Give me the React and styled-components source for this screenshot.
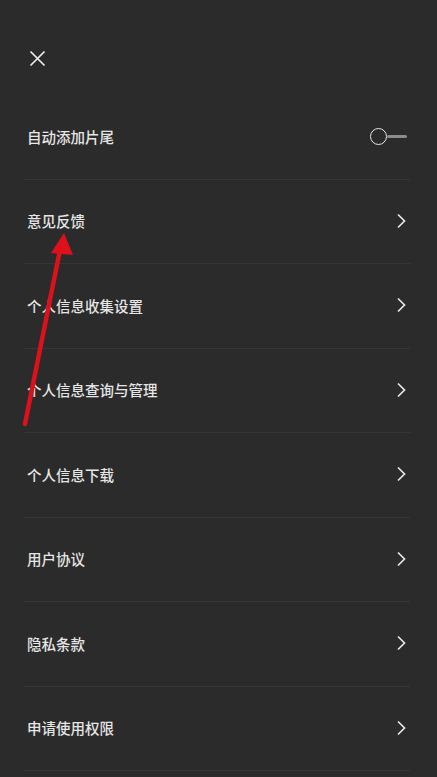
import React from "react";
import styled, { createGlobalStyle } from "styled-components";

const GlobalStyle = createGlobalStyle`
  html, body {
    margin: 0;
    padding: 0;
    background: #2b2b2b;
  }
  body {
    font-family: "Noto Sans CJK SC", "Noto Sans", sans-serif;
  }
`;

const Page = styled.div`
  position: relative;
  width: 437px;
  height: 777px;
  background: #2b2b2b;
  overflow: hidden;
`;

const Header = styled.div`
  height: 95px;
  display: flex;
  align-items: flex-start;
  padding: 50px 0 0 29px;
  box-sizing: border-box;
`;

const CloseButton = styled.button`
  width: 17px;
  height: 17px;
  padding: 0;
  border: none;
  background: transparent;
  display: flex;
  align-items: center;
  justify-content: center;
  cursor: pointer;
`;

const List = styled.div`
  display: flex;
  flex-direction: column;
  margin: 0 27px 0 24px;
`;

const Row = styled.div`
  height: 84.5px;
  box-sizing: border-box;
  display: flex;
  align-items: center;
  justify-content: space-between;
  padding: 0 4px 1px 3px;
  border-bottom: 1px solid #363636;
`;

const Label = styled.span`
  color: #e6e6e6;
  font-size: 14.5px;
  font-weight: 500;
`;

const Toggle = styled.div`
  width: 37px;
  height: 20px;
  display: flex;
  align-items: center;
  margin-right: -1px;
`;

const Knob = styled.div`
  width: 15px;
  height: 15px;
  border: 1.5px solid #e8e8e8;
  border-radius: 50%;
  background: #2b2b2b;
  z-index: 1;
`;

const Track = styled.div`
  flex: 1;
  height: 3px;
  background: #8c8c8c;
  border-radius: 2px;
`;

const Annotation = styled.svg`
  position: absolute;
  left: 0;
  top: 0;
  pointer-events: none;
`;

const items = [
  "意见反馈",
  "个人信息收集设置",
  "个人信息查询与管理",
  "个人信息下载",
  "用户协议",
  "隐私条款",
  "申请使用权限",
];

function Chevron() {
  return (
    <svg width="10" height="16" viewBox="0 0 10 16">
      <path d="M2 1.5 L8.5 8 L2 14.5" fill="none" stroke="#e6e6e6" strokeWidth="1.7" />
    </svg>
  );
}

export default function App() {
  return (
    <>
      <GlobalStyle />
      <Page>
        <Header>
          <CloseButton aria-label="关闭">
            <svg width="17" height="17" viewBox="0 0 17 17">
              <path d="M1.5 1.5 L15.5 15.5 M15.5 1.5 L1.5 15.5" stroke="#ededed" strokeWidth="1.7" />
            </svg>
          </CloseButton>
        </Header>
        <List>
          <Row>
            <Label>自动添加片尾</Label>
            <Toggle>
              <Knob />
              <Track />
            </Toggle>
          </Row>
          {items.map((t) => (
            <Row key={t}>
              <Label>{t}</Label>
              <Chevron />
            </Row>
          ))}
        </List>
        {/* red annotation arrow over the list */}
        <Annotation width="437" height="777" viewBox="0 0 437 777">
          <line x1="25" y1="424" x2="60" y2="250" stroke="#dc111c" strokeWidth="4.5" strokeLinecap="round" />
          <polygon points="64,233 51,253 73,255" fill="#dc111c" />
        </Annotation>
      </Page>
    </>
  );
}
